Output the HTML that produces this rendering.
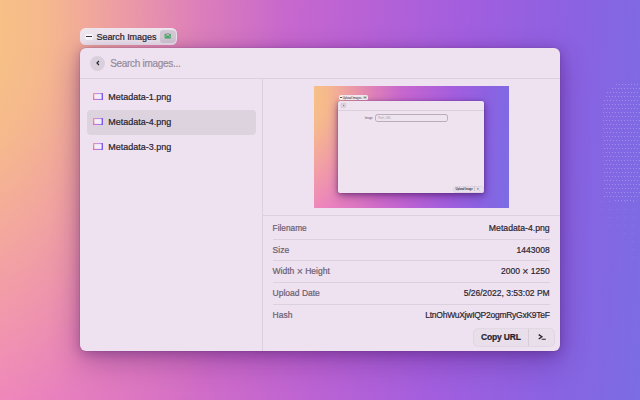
<!DOCTYPE html>
<html><head><meta charset="utf-8">
<style>
*{margin:0;padding:0;box-sizing:border-box}
html,body{width:640px;height:400px;overflow:hidden}
body{position:relative;font-family:"Liberation Sans",sans-serif;
background:
 radial-gradient(ellipse 318px 531px at -35px 25.5px, rgba(247,198,128,1) 0%, rgba(247,198,128,0.826) 25%, rgba(247,198,128,0.487) 50%, rgba(247,198,128,0.165) 75%, rgba(247,198,128,0) 100%),
 linear-gradient(94.83deg,#f279cb 0px,#e171c9 120px,#d36ec7 220px,#bd63d3 340px,#a35ede 460px,#8a62e2 580px,#7b6de3 671.4px);
}
.abs{position:absolute}
.t{position:absolute;white-space:nowrap;line-height:1;-webkit-text-stroke:0.2px currentColor}
.pill{left:80px;top:28px;width:97px;height:17px;border-radius:5.5px;background:#eee5ee}
.win{left:80px;top:48px;width:480px;height:303px;border-radius:6px;background:#efe2f0;box-shadow:0 2px 12px rgba(60,10,90,0.3),0 10px 30px rgba(60,10,90,0.32),0 0 0 0.5px rgba(120,80,140,0.25);overflow:hidden}
.hl{position:absolute;height:1px;background:#ddd0de}
.lbl{color:#6b6070;font-size:8.5px}
.val{color:#2a2530;font-size:8.5px}
</style></head><body>
<svg class="abs" style="left:600px;top:80px" width="40" height="190" viewBox="0 0 40 190"><defs><pattern id="dots" width="6" height="8" patternUnits="userSpaceOnUse"><rect x="0" y="0" width="1" height="1" fill="#ac9ef2"/><rect x="3" y="0" width="1" height="1" fill="#ac9ef2"/><rect x="1" y="4" width="1" height="1" fill="#ac9ef2"/><rect x="4" y="4" width="1" height="1" fill="#ac9ef2"/></pattern><pattern id="dots2" width="8" height="8" patternUnits="userSpaceOnUse"><rect x="1" y="1" width="1" height="1" fill="#9c8eec"/></pattern></defs>
<path d="M4 118 L3 30 Q3 4 24 2 L40 2 L40 120 L20 122 Z" fill="url(#dots)" opacity="0.7"/>
<path d="M0 120 L40 120 L40 180 L30 180 L28 160 L20 150 L8 150 L0 130 Z" fill="url(#dots2)" opacity="0.6"/>
</svg>
<div class="abs pill">
  <div class="abs" style="left:4.5px;top:5.5px;width:8.5px;height:6px;border-radius:2px;background:#fbf8fb"></div>
  <div class="abs" style="left:6px;top:8px;width:5.5px;height:1.2px;background:#3a3540"></div>
  <div class="t" style="left:16.5px;top:4.7px;font-size:9px;letter-spacing:-0.05px;color:#28232e">Search Images</div>
  <div class="abs" style="left:80px;top:1.6px;width:16px;height:13.2px;border-radius:3px 4px 4px 3px;background:#d4cad6"></div>
  <svg class="abs" style="left:83.9px;top:4.2px" width="8" height="8" viewBox="0 0 8 8"><path d="M0.6 2.5 Q0.6 1.8 1.3 1.8 L6.1 1.8 Q6.8 1.8 6.8 2.5 L6.8 6 Q6.8 6.6 6.2 6.6 L1.2 6.6 Q0.6 6.6 0.6 6 Z" fill="#48a866"/><path d="M2.2 2.7 L2.5 1.1 L4.9 1.1 L5.2 2.7 Z" fill="#a59ba7"/><rect x="2.3" y="2.5" width="2.8" height="0.9" fill="#e6dee8"/><circle cx="1.7" cy="4.4" r="0.5" fill="#b8d8c0"/><circle cx="5.7" cy="4.4" r="0.5" fill="#b8d8c0"/></svg>
</div>
<div class="abs win">
  <!-- search bar -->
  <div class="abs" style="left:10.2px;top:7.6px;width:15.2px;height:15.2px;border-radius:50%;background:#d9d0dc"></div>
  <svg class="abs" style="left:13.5px;top:11px" width="8" height="8" viewBox="0 0 8 8"><path d="M4.9 2 L3 4 L4.9 6" stroke="#2a2430" stroke-width="1.2" fill="none"/></svg>
  <div class="t" style="left:30.2px;top:10.6px;font-size:10px;letter-spacing:-0.3px;color:#958a99">Search images...</div>
  <div class="hl" style="left:0;top:30px;width:480px"></div>
  <div class="abs" style="left:182px;top:31px;width:1px;height:272px;background:#ddd0de"></div>
  <!-- list -->
  <div class="abs" style="left:6.5px;top:61.5px;width:169.5px;height:25.5px;border-radius:4px;background:#ddd3df"></div>
  <svg width="0" height="0" style="position:absolute"><defs><linearGradient id="igL" x1="0" x2="0" y1="0" y2="1"><stop offset="0" stop-color="#f5a070"/><stop offset="1" stop-color="#f060b0"/></linearGradient><linearGradient id="igT" x1="0" x2="1"><stop offset="0" stop-color="#e888c8"/><stop offset="1" stop-color="#a890f0"/></linearGradient><linearGradient id="igB" x1="0" x2="1"><stop offset="0" stop-color="#e070c8"/><stop offset="1" stop-color="#9080f0"/></linearGradient></defs></svg>
  <svg class="abs" style="left:13px;top:45px" width="10" height="7" viewBox="0 0 10 7"><rect x="0" y="0" width="10" height="7" rx="0.5" fill="#f3eef8"/><rect x="0" y="0" width="10" height="1.1" fill="url(#igT)"/><rect x="0" y="5.9" width="10" height="1.1" fill="url(#igB)"/><rect x="0" y="0" width="1.3" height="7" fill="url(#igL)"/><rect x="8.6" y="0" width="1.4" height="7" fill="#7a5ae6"/></svg>
  <svg class="abs" style="left:13px;top:70px" width="10" height="7" viewBox="0 0 10 7"><rect x="0" y="0" width="10" height="7" rx="0.5" fill="#f3eef8"/><rect x="0" y="0" width="10" height="1.1" fill="url(#igT)"/><rect x="0" y="5.9" width="10" height="1.1" fill="url(#igB)"/><rect x="0" y="0" width="1.3" height="7" fill="url(#igL)"/><rect x="8.6" y="0" width="1.4" height="7" fill="#7a5ae6"/></svg>
  <svg class="abs" style="left:13px;top:95px" width="10" height="7" viewBox="0 0 10 7"><rect x="0" y="0" width="10" height="7" rx="0.5" fill="#f3eef8"/><rect x="0" y="0" width="10" height="1.1" fill="url(#igT)"/><rect x="0" y="5.9" width="10" height="1.1" fill="url(#igB)"/><rect x="0" y="0" width="1.3" height="7" fill="url(#igL)"/><rect x="8.6" y="0" width="1.4" height="7" fill="#7a5ae6"/></svg>
  <div class="t" style="left:28.3px;top:45.2px;font-size:9px;color:#28232e">Metadata-1.png</div>
  <div class="t" style="left:28.3px;top:70.2px;font-size:9px;color:#28232e">Metadata-4.png</div>
  <div class="t" style="left:28.3px;top:95.2px;font-size:9px;color:#28232e">Metadata-3.png</div>
  <!-- preview image -->
  <div class="abs" style="left:234px;top:38.3px;width:195px;height:121.7px;overflow:hidden;background:
    radial-gradient(ellipse 96.9px 161.8px at -10.7px 7.8px, rgba(247,198,128,1) 0%, rgba(247,198,128,0.826) 25%, rgba(247,198,128,0.487) 50%, rgba(247,198,128,0.165) 75%, rgba(247,198,128,0) 100%),
    linear-gradient(94.83deg,#f279cb 0px,#e171c9 36.6px,#d36ec7 67.0px,#bd63d3 103.6px,#a35ede 140.2px,#8a62e2 176.7px,#7b6de3 204.6px)">
    <div class="abs" style="left:24px;top:14.6px;width:146px;height:92px;border-radius:2px;background:#efe3f0;box-shadow:0 1px 4px rgba(60,10,90,0.35),0 3px 10px rgba(60,10,90,0.45),0 0 0 0.3px rgba(120,80,140,0.3)">
      <div class="abs" style="left:3.4px;top:2.4px;width:4.4px;height:4.4px;border-radius:50%;background:#ddd3df;box-shadow:0 0 0 0.3px #c4b8c6"></div><div class="abs" style="left:5.1px;top:3.9px;width:1.2px;height:1.4px;border-left:0.4px solid #857a88;border-bottom:0.4px solid #857a88;transform:rotate(45deg)"></div>
      <div class="abs" style="left:0;top:9.4px;width:146px;height:0.6px;background:#ddd0de"></div>
      <div class="t" style="left:26.8px;top:16.6px;font-size:2.8px;color:#5a5060;-webkit-text-stroke:0">Image</div>
      <div class="abs" style="left:37.6px;top:13.9px;width:71px;height:6.6px;border-radius:1.5px;background:#eee4ef;box-shadow:0 0 0 0.7px #a89cab"></div>
      <div class="t" style="left:40.2px;top:16.2px;font-size:2.8px;color:#a89eab;-webkit-text-stroke:0">Path, URL</div>
      <div class="abs" style="left:115.5px;top:85.7px;width:29px;height:5.3px;border-radius:1.2px;background:#eae0eb;box-shadow:0 0 0 0.4px #cfc3d1"></div>
      <div class="t" style="left:117.6px;top:87.9px;font-size:2.6px;font-weight:bold;color:#3a3340;-webkit-text-stroke:0">Upload Image</div>
      <div class="abs" style="left:136px;top:85.6px;width:0.5px;height:5px;background:#d0c4d2"></div>
      <div class="t" style="left:138.9px;top:87.4px;font-size:2.8px;font-weight:bold;color:#3a3340;-webkit-text-stroke:0">&gt;_</div>
    </div>
    <div class="abs" style="left:24.6px;top:9px;width:29.4px;height:4.4px;border-radius:1.5px;background:#efe6ee">
      <div class="abs" style="left:1px;top:1.1px;width:2.4px;height:2.2px;border-radius:0.6px;background:#faf6fa"></div><div class="abs" style="left:1.4px;top:2px;width:1.6px;height:0.45px;background:#555"></div>
      <div class="t" style="left:4.2px;top:1.9px;font-size:2.8px;color:#28232e;-webkit-text-stroke:0">Upload Images</div>
      <div class="abs" style="left:24.6px;top:0.5px;width:4px;height:3.4px;border-radius:0.8px;background:#cfc6d2"></div>
      <div class="abs" style="left:25.5px;top:1.4px;width:2.3px;height:1.6px;background:#45a868"></div>
    </div>
  </div>
  <!-- metadata -->
  <div class="hl" style="left:183px;top:166.5px;width:297px"></div>
  <div class="t lbl" style="left:192.6px;top:175.8px;font-size:8.3px">Filename</div>
  <div class="t val" style="right:10.3px;top:175.6px;font-size:8.7px">Metadata-4.png</div>
  <div class="hl" style="left:193px;top:190.5px;width:277px"></div>
  <div class="t lbl" style="left:192.6px;top:197.8px">Size</div>
  <div class="t val" style="right:10.3px;top:197.8px">1443008</div>
  <div class="hl" style="left:193px;top:212px;width:277px"></div>
  <div class="t lbl" style="left:192.6px;top:219.2px">Width <span style="font-size:10.5px;line-height:0;position:relative;top:1.1px;-webkit-text-stroke:0.15px currentColor">×</span> Height</div>
  <div class="t val" style="right:10.3px;top:219.2px">2000 <span style="font-size:10.5px;line-height:0;position:relative;top:1.1px;-webkit-text-stroke:0.15px currentColor">×</span> 1250</div>
  <div class="hl" style="left:193px;top:234px;width:277px"></div>
  <div class="t lbl" style="left:192.6px;top:241.3px">Upload Date</div>
  <div class="t val" style="right:10.3px;top:241.3px">5/26/2022, 3:53:02 PM</div>
  <div class="hl" style="left:193px;top:256px;width:277px"></div>
  <div class="t lbl" style="left:192.6px;top:262.8px">Hash</div>
  <div class="t val" style="right:10.3px;top:262.8px;letter-spacing:-0.26px">LtnOhWuXjwIQP2ogmRyGxK9TeF</div>
  <!-- action bar -->
  <div class="abs" style="left:393.5px;top:280.5px;width:80.5px;height:17.5px;border-radius:4px;background:#e9dfea;box-shadow:0 0 0 0.6px #d6cbd8"></div>
  <div class="abs" style="left:448.3px;top:281px;width:1px;height:16.5px;background:#d6cbd8"></div>
  <div class="t" style="left:401px;top:285.3px;font-size:8.5px;letter-spacing:-0.15px;font-weight:bold;color:#28232e">Copy URL</div>
  <svg class="abs" style="left:457px;top:285px" width="10" height="9" viewBox="0 0 10 9"><path d="M1.7 1.6 L4.9 3.8 L1.7 6" stroke="#28232e" stroke-width="1.3" fill="none"/><path d="M4.6 6.2 L8.8 6.2" stroke="#28232e" stroke-width="1.1"/></svg>
</div>
</body></html>
